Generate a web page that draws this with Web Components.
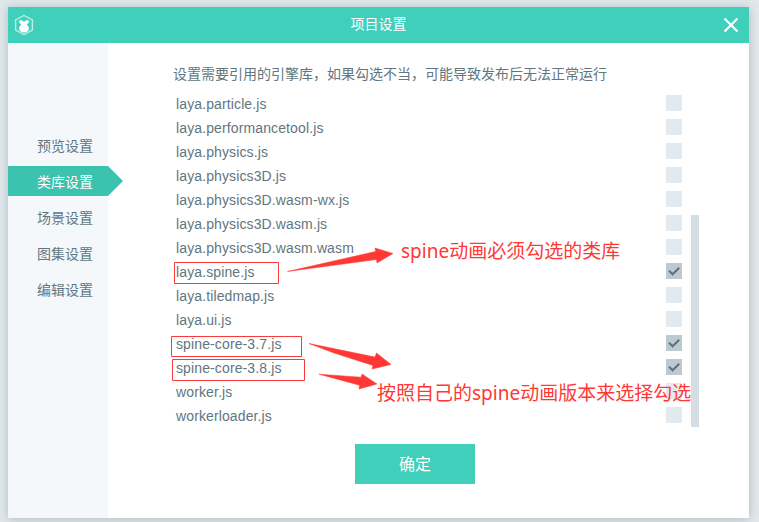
<!DOCTYPE html>
<html lang="zh-CN">
<head>
<meta charset="utf-8">
<title>项目设置</title>
<style>
html,body{margin:0;height:100%;overflow:hidden;background:#e1e8ec}
body{font-family:"Liberation Sans","Noto Sans CJK SC",sans-serif;font-size:14px;color:#627680}
</style>
</head>
<body>
<settings-dialog></settings-dialog>
<script>
const define = (name, render) => customElements.define(name, class extends HTMLElement {
  connectedCallback() {
    if (this.shadowRoot) return;
    this.attachShadow({mode: 'open'}).innerHTML = render(this);
  }
});

define('title-bar', () => `
<style>
:host{display:grid;grid-template-columns:100px 1fr 100px;align-items:center;height:36px;background:#40cfba;color:#fff}
.title{text-align:center;line-height:20px;padding-bottom:2px}
svg{display:block}
.logo{margin-left:6px}
.close{justify-self:end;margin-right:10px}
</style>
<svg class="logo" width="20" height="22" viewBox="0 0 20 22">
<path d="M10 1.5 18.4 6V16L10 20.5 1.6 16V6Z" fill="none" stroke="#fff" stroke-opacity=".65" stroke-width="1.4"/>
<circle cx="6.9" cy="7.9" r="1.8" fill="#fff"/><circle cx="13.1" cy="7.9" r="1.8" fill="#fff"/>
<ellipse cx="10" cy="9.9" rx="3" ry="2.6" fill="#fff"/><ellipse cx="10" cy="14.4" rx="4.9" ry="4" fill="#fff"/>
</svg>
<div class="title"><slot></slot></div>
<svg class="close" width="16" height="16" viewBox="0 0 16 16"><path d="M1.5 1.5 14.5 14.5M14.5 1.5 1.5 14.5" stroke="#fff" stroke-width="2.2"/></svg>`);

define('nav-item', () => `
<style>
:host{display:block;box-sizing:border-box;height:30px;line-height:30px;padding:1px 0 0 29px;white-space:nowrap}
:host([active]){background:#3bc3af;color:#fff;width:115px;clip-path:polygon(0 0,100px 0,100% 50%,100px 100%,0 100%)}
</style><slot></slot>`);

define('side-nav', () => `
<style>
:host{display:flex;flex-direction:column;gap:6px;width:100px;box-sizing:border-box;padding-top:87px;background:#f4f8fb}
</style><slot></slot>`);

define('check-box', el => `
<style>
:host{display:block;width:16px;height:16px;background:#e2eaf0}
:host([checked]){background:#bdcad2}
svg{display:block}
</style>${el.hasAttribute('checked') ? '<svg width="16" height="16" viewBox="0 0 16 16"><path d="M3 7.7 6.6 11.2 13.2 4.8" fill="none" stroke="#5e727c" stroke-width="2.1"/></svg>' : ''}`);

define('lib-row', el => `
<style>
:host{display:flex;justify-content:space-between;align-items:center;height:24px;width:506px}
span{line-height:16px;padding-top:2px;letter-spacing:.12px}
</style><span><slot></slot></span><check-box ${el.hasAttribute('checked') ? 'checked' : ''}></check-box>`);

define('lib-list', () => `
<style>
:host{display:flex;height:336px;padding-left:68px}
.bar{width:8px;height:212px;margin:124px 0 0 9px;background:#d5dee3}
</style><div><slot></slot></div><div class="bar"></div>`);

define('ok-button', () => `
<style>
:host{display:block;width:120px;height:40px;line-height:41px;margin:17px 0 0 247px;text-align:center;font-size:16px;background:#40cfba;color:#fff}
</style><slot></slot>`);

define('mark-up', () => `
<style>
:host{position:absolute;inset:0;pointer-events:none;color:#ff3835;font:19px/24px "Noto Sans","Noto Sans CJK SC",sans-serif;white-space:nowrap}
svg{position:absolute;left:0;top:0}
div{position:absolute}
.a{left:401px;top:239px}
.b{left:377px;top:381px}
</style>
<svg width="759" height="522" viewBox="0 0 759 522">
<g fill="none" stroke="#fb3a3a"><path d="M174.5 262.5h104v21h-104zM171.5 336.5h130v20h-130zM172.5 359.5h132v21h-132z"/></g>
<g fill="#ff3835" stroke="#ff3835" stroke-width=".5"><path d="M287.5 271.5 375.5 251.5 375 248 393 253.5 377 263 376.5 259.5Z"/>
<path d="M309 343.5 375 357 376.5 353 391 364.5 372 369 373 365.5 334 353Z"/>
<path d="M319 374.2 361 377.2 362 374 377 384 359 389 359.5 385.2Z"/></g>
</svg>
<div class="a">spine动画必须勾选的类库</div>
<div class="b">按照自己的spine动画版本来选择勾选</div>`);

const libs = ['laya.particle.js','laya.performancetool.js','laya.physics.js','laya.physics3D.js','laya.physics3D.wasm-wx.js','laya.physics3D.wasm.js','laya.physics3D.wasm.wasm','laya.spine.js','laya.tiledmap.js','laya.ui.js','spine-core-3.7.js','spine-core-3.8.js','worker.js','workerloader.js'];
const enabled = new Set([7, 10, 11]);

define('settings-dialog', () => `
<style>
:host{display:block;position:relative;box-sizing:border-box;height:522px;padding:7px 10px 4px 8px}
.window{display:flex;flex-direction:column;height:511px;background:#fff;box-shadow:0 1px 9px rgba(70,90,100,.32)}
.body{flex:1;display:flex}
main{flex:1;min-width:0}
p{margin:21px 0 7px 65px;line-height:20px}
</style>
<div class="window">
<title-bar>项目设置</title-bar>
<div class="body">
<side-nav><nav-item>预览设置</nav-item><nav-item active>类库设置</nav-item><nav-item>场景设置</nav-item><nav-item>图集设置</nav-item><nav-item>编辑设置</nav-item></side-nav>
<main><p>设置需要引用的引擎库，如果勾选不当，可能导致发布后无法正常运行</p>
<lib-list>${libs.map((n, i) => `<lib-row ${enabled.has(i) ? 'checked' : ''}>${n}</lib-row>`).join('')}</lib-list>
<ok-button>确定</ok-button></main>
</div></div>
<mark-up></mark-up>`);
</script>
</body>
</html>
